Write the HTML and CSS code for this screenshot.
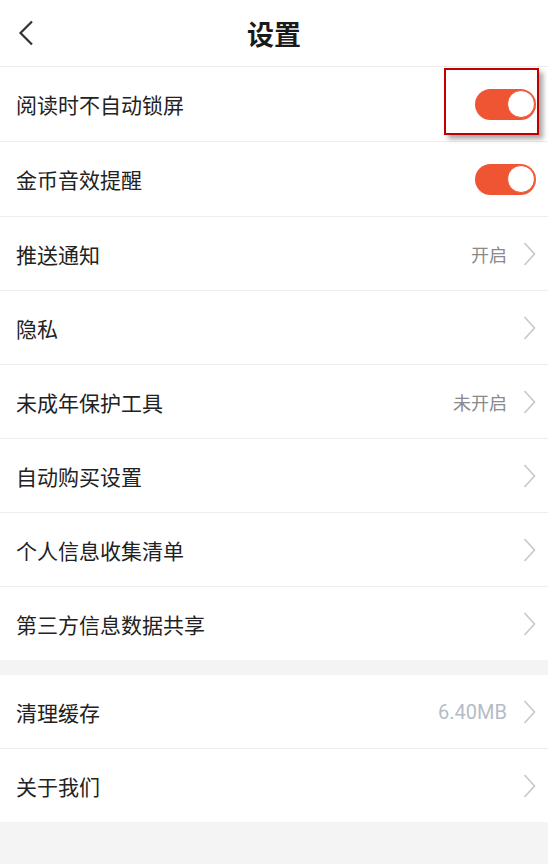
FILE: index.html
```html
<!DOCTYPE html>
<html lang="zh-CN">
<head>
  <meta charset="UTF-8" />
  <meta name="viewport" content="width=device-width, initial-scale=1.0"/>
  <title>设置</title>
  <link rel="stylesheet" href="styles.css">
</head>
<body>
  <div class="header">
    <svg class="back" width="16" height="26" viewBox="0 0 16 26">
      <polyline points="14,1.5 2.5,13 14,24.5" fill="none" stroke="#333" stroke-width="2.2"/>
    </svg>
    <h1>设置</h1>
  </div>

  <div class="group">
    <div class="row tall">
      <span class="label">阅读时不自动锁屏</span>
      <div class="switch-wrap">
        <div class="switch on"><span class="knob"></span></div>
        <div class="mark"></div>
      </div>
    </div>
    <div class="row tall">
      <span class="label">金币音效提醒</span>
      <div class="switch on"><span class="knob"></span></div>
    </div>
    <div class="row">
      <span class="label">推送通知</span>
      <span class="value">开启</span>
      <svg class="arrow" width="13" height="24" viewBox="0 0 13 24"><polyline points="1.5,1 11.5,12 1.5,23" fill="none" stroke="#c8c8c8" stroke-width="1.6"/></svg>
    </div>
    <div class="row">
      <span class="label">隐私</span>
      <svg class="arrow" width="13" height="24" viewBox="0 0 13 24"><polyline points="1.5,1 11.5,12 1.5,23" fill="none" stroke="#c8c8c8" stroke-width="1.6"/></svg>
    </div>
    <div class="row">
      <span class="label">未成年保护工具</span>
      <span class="value">未开启</span>
      <svg class="arrow" width="13" height="24" viewBox="0 0 13 24"><polyline points="1.5,1 11.5,12 1.5,23" fill="none" stroke="#c8c8c8" stroke-width="1.6"/></svg>
    </div>
    <div class="row">
      <span class="label">自动购买设置</span>
      <svg class="arrow" width="13" height="24" viewBox="0 0 13 24"><polyline points="1.5,1 11.5,12 1.5,23" fill="none" stroke="#c8c8c8" stroke-width="1.6"/></svg>
    </div>
    <div class="row">
      <span class="label">个人信息收集清单</span>
      <svg class="arrow" width="13" height="24" viewBox="0 0 13 24"><polyline points="1.5,1 11.5,12 1.5,23" fill="none" stroke="#c8c8c8" stroke-width="1.6"/></svg>
    </div>
    <div class="row last">
      <span class="label">第三方信息数据共享</span>
      <svg class="arrow" width="13" height="24" viewBox="0 0 13 24"><polyline points="1.5,1 11.5,12 1.5,23" fill="none" stroke="#c8c8c8" stroke-width="1.6"/></svg>
    </div>
  </div>

  <div class="group">
    <div class="row">
      <span class="label">清理缓存</span>
      <span class="value size">6.40MB</span>
      <svg class="arrow" width="13" height="24" viewBox="0 0 13 24"><polyline points="1.5,1 11.5,12 1.5,23" fill="none" stroke="#c8c8c8" stroke-width="1.6"/></svg>
    </div>
    <div class="row last">
      <span class="label">关于我们</span>
      <svg class="arrow" width="13" height="24" viewBox="0 0 13 24"><polyline points="1.5,1 11.5,12 1.5,23" fill="none" stroke="#c8c8c8" stroke-width="1.6"/></svg>
    </div>
  </div>
</body>
</html>
```

FILE: styles.css
```css
body {
  margin: 0;
  background: #f4f4f4;
  font-family: "Noto Sans CJK SC", "Noto Sans", sans-serif;
  color: #222;
}

.header {
  position: relative;
  height: 66px;
  background: #fff;
  border-bottom: 1px solid #ececec;
  display: flex;
  align-items: center;
  justify-content: center;
}

.header .back {
  position: absolute;
  left: 18px;
  top: 20px;
}

.header h1 {
  margin: 0;
  font-size: 27px;
  font-weight: bold;
  color: #1a1a1a;
}

.group {
  background: #fff;
  margin-bottom: 15px;
}

.row {
  height: 73px;
  display: flex;
  align-items: center;
  padding: 0 12px 0 16px;
  border-bottom: 1px solid #eeeeee;
}

.row.tall {
  height: 74px;
}

.row.last {
  border-bottom: none;
}

.label {
  flex: 1;
  font-size: 21px;
  color: #222;
}

.value {
  font-size: 18px;
  color: #8a8a8a;
  margin-right: 16px;
}

.value.size {
  font-family: Roboto, "Noto Sans", sans-serif;
  font-size: 20px;
  color: #b4bcc6;
}

.arrow {
  display: block;
}

.switch-wrap {
  position: relative;
}

.switch {
  width: 61px;
  height: 31px;
  border-radius: 16px;
  background: #f05533;
  position: relative;
}

.switch .knob {
  position: absolute;
  right: 1px;
  top: 1px;
  width: 26px;
  height: 26px;
  border-radius: 50%;
  background: #fff;
  border: 1.5px solid #f05533;
}

.mark {
  position: absolute;
  left: -31px;
  top: -21px;
  width: 91px;
  height: 63px;
  border: 2px solid #c00000;
  box-shadow: 4px 4px 5px rgba(0, 0, 0, 0.35);
}
```
